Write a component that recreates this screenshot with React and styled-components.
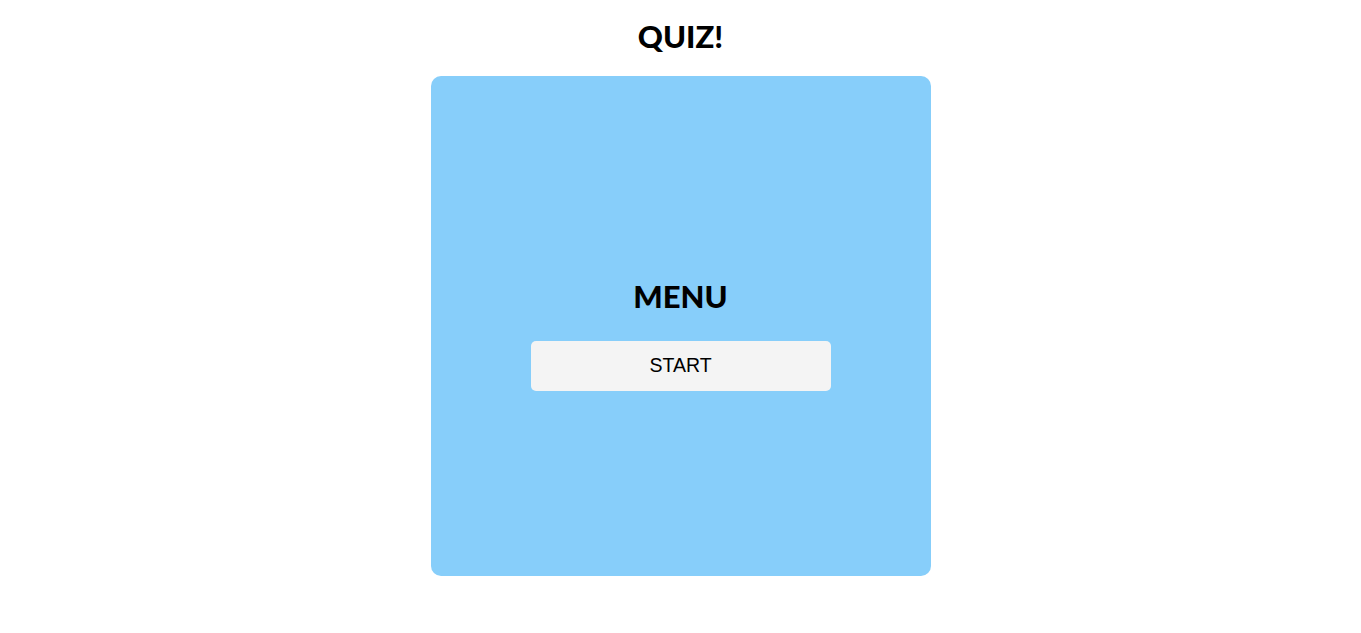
import React from "react";
import styled, { createGlobalStyle } from "styled-components";

const Global = createGlobalStyle`
  html, body { margin: 0; padding: 0; background: #ffffff; }
  body { font-family: Lato, "Noto Sans", sans-serif; }
`;

const Page = styled.main`
  display: flex;
  flex-direction: column;
  align-items: center;
  padding-top: 16px;
  gap: 20px;
`;

const Title = styled.h1`
  margin: 0;
  font-family: Lato, sans-serif;
  font-weight: 900;
  font-size: 31px;
  line-height: 40px;
  color: #000;
`;

const Card = styled.section`
  width: 500px;
  height: 500px;
  box-sizing: border-box;
  background: #87cefa;
  border-radius: 10px;
  display: flex;
  flex-direction: column;
  align-items: center;
  justify-content: center;
  padding-top: 14px;
  gap: 25px;
`;

const Heading = styled.h2`
  margin: 0;
  font-family: Lato, sans-serif;
  font-weight: 900;
  font-size: 31px;
  line-height: 40px;
  color: #000;
`;

const Button = styled.button`
  width: 300px;
  height: 50px;
  border: none;
  border-radius: 5px;
  background: #f4f4f4;
  color: #000;
  font-family: "Liberation Sans", Arial, sans-serif;
  font-size: 19.5px;
  cursor: pointer;
`;

export default function App() {
  return (
    <>
      <Global />
      <Page>
        <Title>QUIZ!</Title>
        <Card>
          <Heading>MENU</Heading>
          <Button>START</Button>
        </Card>
      </Page>
    </>
  );
}
